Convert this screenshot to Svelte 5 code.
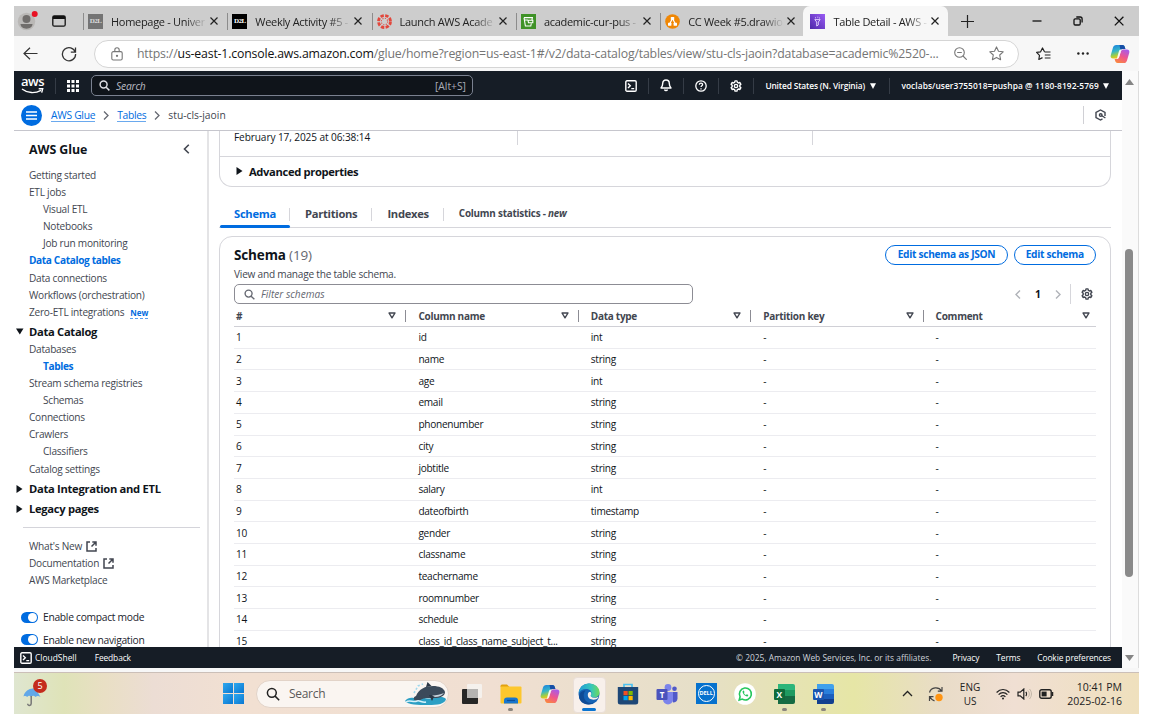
<script>
  const tabs = [
    { title: 'Homepage - Univer', icon: 'd2lgray' },
    { title: 'Weekly Activity #5 -', icon: 'd2l' },
    { title: 'Launch AWS Acade', icon: 'canvas' },
    { title: 'academic-cur-pus -', icon: 's3' },
    { title: 'CC Week #5.drawio', icon: 'drawio' },
    { title: 'Table Detail - AWS -', icon: 'glue', active: true }
  ];
  const navTop = [
    ['Getting started'], ['ETL jobs'], ['Visual ETL', 1], ['Notebooks', 1], ['Job run monitoring', 1],
    ['Data Catalog tables', 0, 1], ['Data connections'], ['Workflows (orchestration)'], ['Zero-ETL integrations', 0, 0, 1]
  ];
  const navCatalog = [
    ['Databases'], ['Tables', 1, 1], ['Stream schema registries'], ['Schemas', 1], ['Connections'],
    ['Crawlers'], ['Classifiers', 1], ['Catalog settings']
  ];
  const columns = ['#', 'Column name', 'Data type', 'Partition key', 'Comment'];
  const rows = [
    ['id', 'int'], ['name', 'string'], ['age', 'int'], ['email', 'string'], ['phonenumber', 'string'],
    ['city', 'string'], ['jobtitle', 'string'], ['salary', 'int'], ['dateofbirth', 'timestamp'], ['gender', 'string'],
    ['classname', 'string'], ['teachername', 'string'], ['roomnumber', 'string'], ['schedule', 'string'],
    ['class_id_class_name_subject_t...', 'string']
  ];
  const gearTeeth = 'M6.7 1.2h2.6l.5 1.9 1.5.9 1.9-.6 1.3 2.3-1.4 1.4v1.8l1.4 1.4-1.3 2.3-1.9-.6-1.5.9-.5 1.9H6.7l-.5-1.9-1.5-.9-1.9.6-1.3-2.3 1.4-1.4V7.1L1.500 5.7l1.3-2.3 1.9.6 1.5-.9z';
</script>

{#snippet copilot(size)}
  <svg width={size} height={size} viewBox="0 0 20 20">
    <defs>
      <linearGradient id="cpa" x1="0" y1="0" x2="0.3" y2="1"><stop offset="0" stop-color="#1b7fe0" /><stop offset=".5" stop-color="#35b6c8" /><stop offset=".8" stop-color="#a6cf3f" /><stop offset="1" stop-color="#f5c518" /></linearGradient>
      <linearGradient id="cpb" x1="0.7" y1="0" x2="0.2" y2="1"><stop offset="0" stop-color="#a95be8" /><stop offset=".5" stop-color="#f0568c" /><stop offset="1" stop-color="#fa8a3c" /></linearGradient>
    </defs>
    <path d="M6.2 1h6.2c1.3 0 2 .8 2.400 2l.6 2h-2.600c-1.200 0-2 .7-2.400 2l-1.700 5.600c-.4 1.300-1 2-2.300 2H3.200C1 14.600.2 13 .8 11L3 3.600C3.500 2 4.500 1 6.200 1z" fill="url(#cpa)" />
    <path d="M9.500 1h3c1.300 0 2 .8 2.300 2l.6 2h-2.600c-1.100 0-1.900.6-2.300 1.700z" fill="#174ea6" />
    <path d="M13.800 19H7.600c-1.300 0-2-.8-2.400-2l-.6-2h2.200c1.300 0 2-.7 2.400-2l1.700-5.600c.4-1.300 1.100-2 2.400-2h3.500c2.200 0 3 1.600 2.400 3.600L17 16.400C16.500 18 15.500 19 13.800 19z" fill="url(#cpb)" />
    <path d="M8.200 9.800l.9-3c.3-.9.9-1.400 1.900-1.400h.9c-.7.500-.9 1.200-1.200 2l-1.700 5.600c-.3.900-.8 1.500-1.500 1.800h-.6z" fill="#fff" opacity=".9" />
  </svg>
{/snippet}

{#snippet shell()}
  <svg width="12" height="12" viewBox="0 0 12 12" fill="none" stroke="currentColor" stroke-width="1.400"><rect x=".8" y=".8" width="10.400" height="10.400" rx="1.200" /><path d="M3 3.500l2.300 2.300L3 8.100M6.300 8.600h2.900" /></svg>
{/snippet}

{#snippet lens(size, w)}
  <svg width={size} height={size} viewBox="0 0 12 12" fill="none" stroke="currentColor" stroke-width={w}><circle cx="5" cy="5" r="3.800" /><path d="M7.800 7.800l3.500 3.500" /></svg>
{/snippet}

{#snippet gear(size)}
  <svg width={size} height={size} viewBox="0 0 16 16" fill="none" stroke="currentColor" stroke-width="1.900" stroke-linejoin="round"><path d={gearTeeth} /><circle cx="8" cy="8" r="2.200" /></svg>
{/snippet}

{#snippet ext()}
  <svg width="11" height="11" viewBox="0 0 11 11" fill="none" stroke="#424650" stroke-width="1.500"><path d="M4 1H1v9h9V7M6.300 1H10v3.700M10 1L5.500 5.500" /></svg>
{/snippet}

{#snippet favicon(kind)}
  {#if kind === 'd2l' || kind === 'd2lgray'}
    <span class="d2l" class:gray={kind === 'd2lgray'}>D2L</span>
  {:else if kind === 'canvas'}
    <svg width="15" height="15" viewBox="0 0 15 15"><circle cx="7.500" cy="7.500" r="6" fill="none" stroke="#e2473c" stroke-width="2.800" stroke-dasharray="3.300 1.410" /><circle cx="7.500" cy="7.500" r="3.200" fill="none" stroke="#e2473c" stroke-width="1.100" stroke-dasharray="1.100 1.410" /></svg>
  {:else if kind === 's3'}
    <svg width="15" height="15" viewBox="0 0 15 15"><rect width="15" height="15" fill="#3f9227" /><path d="M3 3.600h8.400l-.5 2.500M3 3.600l1.400 8.400h5.400l.5-2.500M3.400 6h3.500M7 6.200h4.800v2.600H7.500z" fill="none" stroke="#fff" stroke-width="1.100" /></svg>
  {:else if kind === 'drawio'}
    <svg width="15" height="15" viewBox="0 0 15 15"><circle cx="7.500" cy="7.500" r="7.300" fill="#f08705" /><path d="M7.500 4.500L4.600 10M7.500 4.500l2.900 5.500" stroke="#fff" stroke-width="1.200" /><rect x="5.800" y="3" width="3.400" height="3" rx=".5" fill="#fff" /><rect x="3" y="8.800" width="3.400" height="3" rx=".5" fill="#fff" /><rect x="8.600" y="8.800" width="3.400" height="3" rx=".5" fill="#fff" /></svg>
  {:else}
    <svg width="15" height="15" viewBox="0 0 15 15"><defs><linearGradient id="gl" x1="0" y1="1" x2="1" y2="0"><stop offset="0" stop-color="#4d27a8" /><stop offset="1" stop-color="#9a5cf5" /></linearGradient></defs><rect width="15" height="15" fill="url(#gl)" /><path d="M4.800 5.600h5.400L8.300 8v3l-1.600 1V8zM5 3.800h1M7.300 3.200h1M9 4h1" fill="none" stroke="#e6d8ff" stroke-width=".9" /></svg>
  {/if}
{/snippet}

<div class="screen">
  <div class="tabbar">
    <span class="avatar">
      <svg width="22" height="22" viewBox="0 0 22 22"><circle cx="10.500" cy="12.500" r="8.700" fill="#bab8b6" /><circle cx="10.500" cy="10" r="4" fill="#706d6b" /><path d="M4.500 15h12c0 2.700-2.500 4.700-6 4.700s-6-2-6-4.700z" fill="#706d6b" /><circle cx="18.700" cy="5" r="3" fill="#e81123" /></svg>
    </span>
    <svg class="work" width="14" height="12" viewBox="0 0 14 12"><rect x=".8" y=".8" width="12.400" height="10.400" rx="1.500" fill="none" stroke="#111" stroke-width="1.300" /><path d="M1 1h12v3H1z" fill="#111" /></svg>
    <div class="tabs">
      {#each tabs as t}
        <div class="tab" class:active={t.active}>
          {@render favicon(t.icon)}
          <span class="ttl">{t.title}</span>
          <svg width="8" height="8" viewBox="0 0 8 8" stroke="#222" stroke-width="1.200"><path d="M.5.5l7 7M7.500.5l-7 7" /></svg>
        </div>
      {/each}
    </div>
    <svg class="plus" width="13" height="13" viewBox="0 0 13 13" stroke="#222" stroke-width="1.200"><path d="M6.500 0v13M0 6.500h13" /></svg>
    <div class="winbtns">
      <svg width="10" height="10" viewBox="0 0 10 10" stroke="#111" stroke-width="1.300"><path d="M.5 5h9" /></svg>
      <svg width="10" height="10" viewBox="0 0 10 10" fill="none" stroke="#111" stroke-width="1.300"><rect x="1" y="2.800" width="6.200" height="6.200" rx="1.200" /><path d="M3.300 1h3.900c1.100 0 1.900.8 1.900 1.900v3.600" /></svg>
      <svg width="10" height="10" viewBox="0 0 10 10" stroke="#111" stroke-width="1.300"><path d="M.8.800l8.600 8.600M9.400.8L.8 9.400" /></svg>
    </div>
  </div>

  <div class="addrbar">
    <svg class="back" width="15" height="13" viewBox="0 0 15 13" fill="none" stroke="#333" stroke-width="1.200"><path d="M14.500 6.500H1M7 .7L1 6.500l6 5.800" /></svg>
    <svg class="reload" width="16" height="16" viewBox="0 0 16 16" fill="none" stroke="#333" stroke-width="1.300"><path d="M14.300 6.200A6.600 6.600 0 1 0 14.600 8M14.500 1.500v4.700H9.800" /></svg>
    <div class="url">
      <svg width="12" height="14" viewBox="0 0 12 14" fill="none" stroke="#777" stroke-width="1.100"><rect x=".8" y="4.600" width="10.400" height="8.400" rx="1.500" /><path d="M3.800 4.600V3a2.200 2.200 0 0 1 4.400 0v1.600" /><circle cx="6" cy="8.800" r=".6" fill="#777" /></svg>
      <span class="urltext">https://<b>us-east-1.console.aws.amazon.com</b>/glue/home?region=us-east-1#/v2/data-catalog/tables/view/stu-cls-jaoin?database=academic%2520-...</span>
      <svg class="zoomout" width="13" height="13" viewBox="0 0 13 13" fill="none" stroke="#777" stroke-width="1.100"><circle cx="5.500" cy="5.500" r="4.800" /><path d="M9 9l3.700 3.700M3.200 5.500h4.600" /></svg>
      <svg width="15" height="15" viewBox="0 0 15 15" fill="none" stroke="#777" stroke-width="1.100" stroke-linejoin="round"><path d="M7.500.9l2 4.300 4.700.6-3.500 3.200.9 4.700-4.100-2.300-4.100 2.300.9-4.700L.8 5.800l4.700-.6z" /></svg>
    </div>
    <svg class="fav" width="15" height="14" viewBox="0 0 15 14" fill="none" stroke="#222" stroke-width="1.200" stroke-linejoin="round"><path d="M8.500 4.800L6.500 1l-1.900 3.800-4 .6 2.900 2.900-.7 4.200L6.500 10.600M8.500 5h6M8.800 8h5.700M8.800 11h5.700" /></svg>
    <svg class="more" width="12" height="3" viewBox="0 0 12 3" fill="#222"><circle cx="1.400" cy="1.500" r="1.200" /><circle cx="6" cy="1.500" r="1.200" /><circle cx="10.600" cy="1.500" r="1.200" /></svg>
    {@render copilot(20)}
  </div>

  <div class="viewport">
    <div class="page">
      <div class="awsnav">
        <div class="logo">
          <span>aws</span>
          <svg width="23" height="6" viewBox="0 0 23 6" fill="none" stroke="#fff" stroke-width="1.400"><path d="M1 1c5.500 4.300 13 4.700 19 1.300M17.700.7l4 .1-1 3.900" /></svg>
        </div>
        <i class="vl"></i>
        <svg class="grid9" width="12" height="12" viewBox="0 0 12 12" fill="#fff"><path d="M0 0h3v3H0zM4.500 0h3v3h-3zM9 0h3v3H9zM0 4.500h3v3H0zM4.500 4.500h3v3h-3zM9 4.500h3v3H9zM0 9h3v3H0zM4.500 9h3v3h-3zM9 9h3v3H9z" /></svg>
        <div class="awssearch">{@render lens(11, 1.6)}<em>Search</em><span>[Alt+S]</span></div>
        <div class="tools">
          <div>{@render shell()}</div>
          <div><svg width="12" height="13" viewBox="0 0 12 13" fill="none" stroke="currentColor" stroke-width="1.400" stroke-linejoin="round"><path d="M6 1C3.800 1 2.700 2.500 2.700 4.500c0 2.500-.8 3.300-1.700 4.500h10c-.9-1.200-1.700-2-1.700-4.500C9.300 2.500 8.200 1 6 1zM4.600 10.500c.3 1.500 2.500 1.500 2.800 0" /></svg></div>
          <div><svg width="12" height="12" viewBox="0 0 12 12" fill="none" stroke="currentColor" stroke-width="1.300"><circle cx="6" cy="6" r="5.200" /><path d="M4.300 4.700C4.400 2.500 7.700 2.600 7.600 4.600 7.500 5.800 6 5.700 6 7.100M6 8.200v1.300" /></svg></div>
          <div>{@render gear(12)}</div>
        </div>
        <div class="region">United States (N. Virginia) <svg width="6" height="6" viewBox="0 0 6 6"><path d="M0 .3h6L3 6z" fill="#fff" /></svg></div>
        <div class="user">voclabs/user3755018=pushpa @ 1180-8192-5769 <svg width="6" height="6" viewBox="0 0 6 6"><path d="M0 .3h6L3 6z" fill="#fff" /></svg></div>
      </div>

      <div class="crumbs">
        <span class="burger"><svg width="11" height="9" viewBox="0 0 11 9" stroke="#fff" stroke-width="1.300"><path d="M0 1h11M0 4.500h11M0 8h11" /></svg></span>
        <span class="lnk">AWS Glue</span>
        <svg class="chev" width="6" height="9" viewBox="0 0 6 9" fill="none" stroke="#656871" stroke-width="1.300"><path d="M1 .5l4 4-4 4" /></svg>
        <span class="lnk">Tables</span>
        <svg class="chev" width="6" height="9" viewBox="0 0 6 9" fill="none" stroke="#656871" stroke-width="1.300"><path d="M1 .5l4 4-4 4" /></svg>
        <span class="cur">stu-cls-jaoin</span>
        <span class="hex"><svg width="11" height="12" viewBox="0 0 11 12" fill="none" stroke="#424650" stroke-width="1.400"><path d="M10 7V3.500L5.500 1 1 3.500v5L5.500 11l2-1.100M6.500 6.500L10.400 9" /><circle cx="5.700" cy="6" r="1.300" /></svg></span>
      </div>

      <div class="body">
        <aside>
          <div class="head"><span>AWS Glue</span><svg width="7" height="10" viewBox="0 0 7 10" fill="none" stroke="#424650" stroke-width="1.600"><path d="M5.800.8L1.500 5l4.300 4.200" /></svg></div>
          {#each navTop as [t, sub, on, isNew]}
            <div class="ni" class:sub class:on>{t}{#if isNew}<span class="new">New</span>{/if}</div>
          {/each}
          <div class="grp first"><svg width="8" height="7" viewBox="0 0 8 7"><path d="M0 .5h7.500L3.800 6.500z" fill="#0f141a" /></svg>Data Catalog</div>
          {#each navCatalog as [t, sub, on]}
            <div class="ni" class:sub class:on>{t}</div>
          {/each}
          <div class="grp di"><svg width="8" height="8" viewBox="0 0 8 8"><path d="M.5 0v8l6-4z" fill="#0f141a" /></svg>Data Integration and ETL</div>
          <div class="grp"><svg width="8" height="8" viewBox="0 0 8 8"><path d="M.5 0v8l6-4z" fill="#0f141a" /></svg>Legacy pages</div>
          <div class="hr"></div>
          <div class="ni">What's New {@render ext()}</div>
          <div class="ni">Documentation {@render ext()}</div>
          <div class="ni">AWS Marketplace</div>
          <div class="tg one"><i></i>Enable compact mode</div>
          <div class="tg"><i></i>Enable new navigation</div>
        </aside>

        <main>
          <section class="details">
            <div class="cols"><div>February 17, 2025 at 06:38:14</div><div></div><div></div></div>
            <div class="adv"><svg width="7" height="8" viewBox="0 0 7 8"><path d="M.5 0v8L6.500 4z" fill="#0f141a" /></svg>Advanced properties</div>
          </section>
          <div class="subtabs">
            <div class="st on">Schema</div>
            <div class="st">Partitions</div>
            <div class="st">Indexes</div>
            <div class="st stat">Column statistics - <em>new</em></div>
          </div>
          <section class="schema">
            <div class="top">
              <h2>Schema <span>(19)</span></h2>
              <div class="btns"><button class="wide">Edit schema as JSON</button><button>Edit schema</button></div>
            </div>
            <p>View and manage the table schema.</p>
            <div class="filterrow">
              <div class="filter">{@render lens(11, 1.5)}<em>Filter schemas</em></div>
              <div class="pager">
                <svg width="6" height="9" viewBox="0 0 6 9" fill="none" stroke="#b0b3b9" stroke-width="1.400"><path d="M5 .5l-4 4 4 4" /></svg>
                <b>1</b>
                <svg width="6" height="9" viewBox="0 0 6 9" fill="none" stroke="#b0b3b9" stroke-width="1.400"><path d="M1 .5l4 4-4 4" /></svg>
                <i></i>
                {@render gear(12)}
              </div>
            </div>
            <div class="tr th">
              {#each columns as c}
                <div>{c}<svg width="8" height="7" viewBox="0 0 8 7"><path d="M1 1h6L4 5.800z" fill="none" stroke="#424650" stroke-width="1.400" stroke-linejoin="round" /></svg></div>
              {/each}
            </div>
            {#each rows as [name, type], i}
              <div class="tr"><div>{i + 1}</div><div>{name}</div><div>{type}</div><div>-</div><div>-</div></div>
            {/each}
          </section>
        </main>
      </div>

      <footer>
        <span class="cs">{@render shell()}CloudShell</span><span class="fb">Feedback</span>
        <span class="copy">© 2025, Amazon Web Services, Inc. or its affiliates.</span><span class="f1">Privacy</span><span class="f2">Terms</span><span class="f3">Cookie preferences</span>
      </footer>
    </div>
    <div class="scroll">
      <svg width="9" height="6" viewBox="0 0 9 6"><path d="M4.500 0L9 6H0z" fill="#858585" /></svg>
      <i></i>
      <svg width="9" height="6" viewBox="0 0 9 6"><path d="M4.500 6L9 0H0z" fill="#858585" /></svg>
    </div>
  </div>

  <div class="taskbar">
    <div class="weather">
      <svg width="19" height="20" viewBox="0 0 19 20"><path d="M.5 9.500C2 3 9 0 13 2.500l4.500 7.500c-2-1.500-3.500-1.300-5 0-1.500-1.600-3-1.600-4.300 0-1.500-1.600-2.700-1.600-4 0-1-1.100-2.300-1.300-3.700-.5z" fill="#62a8e8" /><path d="M8.200 9v7.500c0 2.500-3.500 2.500-3.500.3" fill="none" stroke="#777" stroke-width="1.500" /></svg>
      <b>5</b>
    </div>
    <div class="win"><i></i><i></i><i></i><i></i></div>
    <div class="tsearch">
      <span class="gl">{@render lens(14, 1.3)}</span><span>Search</span>
      <svg width="44" height="24" viewBox="0 0 44 24"><path d="M1 19c3-4 8-4 11-2 6-3 12 1 18-1 5-1 9-2 12 1-1 5-8 6-18 6S4 23 1 19z" fill="#2c9fc4" /><path d="M12 19c-3-1-3-4 0-5 3-7 9-10 17-10 6 0 11 2 12 6 0 4-5 6-10 6-6 0-12-1-16 3z" fill="#3b4a5a" /><path d="M22 5l1.500-5 4 4zM25 13l3 6 3-6z" fill="#2b3746" /><path d="M28 13.500c5 0 8-1 12-2.500-2 2.500-5 4-9 4z" fill="#c9d3dc" /><path d="M2 20c4-3 7 1 11-1 3-1 5 2 9 1" stroke="#d8f3fb" stroke-width="1.500" fill="none" /><path d="M10 11l4-7 5-2" stroke="#9fd8ee" stroke-width="1.600" stroke-dasharray="2 2" fill="none" /></svg>
    </div>
    <div class="apps">
      <div><svg width="22" height="22" viewBox="0 0 22 22"><rect x="1" y="6" width="16" height="15" rx="1" fill="#262626" /><rect x="6" y="1" width="15" height="14" rx="1" fill="#f4f1ee" opacity=".95" /><rect x="6" y="6" width="11" height="9" fill="#b5b3b1" /></svg></div>
      <div class="run"><svg width="22" height="22" viewBox="0 0 22 22"><path d="M.5 3a1.500 1.500 0 0 1 1.500-1.500h5L9.500 4H.5z" fill="#e2a10f" /><rect x=".5" y="3.500" width="21" height="17" rx="1" fill="#fdc72d" /><path d="M4 20.500v-3a3 3 0 0 1 3-3h8a3 3 0 0 1 3 3v3z" fill="#1976cf" /><path d="M7 17.500h8" stroke="#0d4f99" stroke-width="1.200" /></svg></div>
      <div>{@render copilot(20)}</div>
      <div class="edge"><svg width="22" height="22" viewBox="0 0 22 22"><defs><linearGradient id="eg" x1="0" y1=".5" x2="1" y2=".5"><stop offset="0" stop-color="#229bd6" /><stop offset=".6" stop-color="#36c6bb" /><stop offset="1" stop-color="#6fd95a" /></linearGradient></defs><circle cx="11" cy="11" r="10.500" fill="#1663b5" /><path d="M.6 10.500C1 4 5.500.5 11 .5c6 0 10.500 4 10.500 8.700 0 3.300-2.600 5.300-5.300 5.300-2.400 0-3.700-1-3.700-1.900 0-.7.900-1 .9-2.600C13.400 7.600 11.200 6 8 6 4.500 6 1.600 7.800.6 10.500z" fill="url(#eg)" /><path d="M7.500 7.500c-2.300 2.500-2.500 7.500.5 10.500 2.500 2.600 6 2.500 9 .4C13 23 4 22.500 1.300 15.500.4 10 4.500 7.400 7.500 7.500z" fill="#0f4b96" /><path d="M9.800 11.800c0-2 1.200-3.100 2.500-3.100 1.100.8 1.200 2.200.5 3.400-.8 1.500 1 2.700 3.700 2.600 1.800-.1 3-.5 4.200-1.300-.5 1-1 1.900-1.800 2.700-4.300 1.500-9.100.3-9.100-4.300z" fill="#f8f0eb" /></svg></div>
      <div><svg width="22" height="22" viewBox="0 0 22 22"><path d="M7 4V1.500h8V4" fill="none" stroke="#4cc2f1" stroke-width="1.700" /><path d="M.8 4h20.400v15a2.500 2.500 0 0 1-2.500 2.500H3.300A2.500 2.500 0 0 1 .8 19z" fill="#1d4777" /><path d="M6.500 8h4.200v4.200H6.500z" fill="#f25022" /><path d="M11.500 8h4.200v4.200h-4.200z" fill="#7fba00" /><path d="M6.500 13h4.200v4.200H6.500z" fill="#00a4ef" /><path d="M11.500 13h4.200v4.200h-4.200z" fill="#ffb900" /></svg></div>
      <div><span class="teams"><svg width="22" height="22" viewBox="0 0 22 22"><circle cx="12" cy="4.500" r="3.400" fill="#7b83eb" /><circle cx="18.500" cy="5.800" r="2.300" fill="#5059c9" /><path d="M15 9h6.500v6.500c0 2.500-2 4-4.500 4z" fill="#5059c9" /><path d="M7 9h10v7.500a5 5 0 0 1-10 0z" fill="#7b83eb" /><rect x=".5" y="6" width="11" height="11" rx="1" fill="#4b53bc" /></svg><b>T</b></span></div>
      <div><span class="dell"><b>DELL</b></span></div>
      <div><svg width="22" height="22" viewBox="0 0 22 22"><circle cx="11" cy="11" r="10.800" fill="#fff" /><path d="M5.200 17l.9-3.200a6 6 0 1 1 2.200 2.300z" fill="none" stroke="#25c75c" stroke-width="1.600" /><path d="M8.700 8c-.7 2 2.300 5.700 4.900 5.400l.8-1.300-1.600-.9-.8.700c-1-.3-1.800-1.200-2.100-2l.6-.7-.6-1.600z" fill="#25c75c" /></svg></div>
      <div class="run"><span class="off xl"><b>X</b></span></div>
      <div class="run"><span class="off wd"><b>W</b></span></div>
    </div>
    <div class="tray">
      <svg class="up" width="11" height="7" viewBox="0 0 11 7" fill="none" stroke="#222" stroke-width="1.300"><path d="M1 6l4.500-4.500L10 6" /></svg>
      <svg class="sync" width="16" height="16" viewBox="0 0 16 16" fill="none" stroke="#444" stroke-width="1.200"><path d="M1.500 6.500C3 .8 11 .5 13.500 5M14 1v4.200H9.800M1.500 15v-4.300h4M2 11c1 2 2.500 3.300 4.500 3.800" /><circle cx="11" cy="11.500" r="3.700" fill="#ff9412" stroke="none" /></svg>
      <div class="lang">ENG<br />US</div>
      <svg class="wifi" width="14" height="12" viewBox="0 0 14 12" fill="none" stroke="#222" stroke-width="1.200"><path d="M.6 4.500c3.700-4 9.100-4 12.800 0M2.600 6.700c2.600-2.800 6.200-2.800 8.800 0M4.600 8.800c1.500-1.500 3.300-1.500 4.800 0" /><circle cx="7" cy="10.500" r="1" fill="#222" stroke="none" /></svg>
      <svg class="vol" width="15" height="12" viewBox="0 0 15 12" fill="none" stroke="#222" stroke-width="1.200"><path d="M1 4.200h2.200L6.800 1v10L3.200 7.800H1z" /><path d="M8.800 4c1 1 1 3 0 4" /><path d="M10.800 2.500c2 2 2 5 0 7M12.500 1c2.600 3 2.600 7 0 10" stroke="#bbb0a0" stroke-width=".9" /></svg>
      <svg class="bat" width="15" height="10" viewBox="0 0 15 10"><rect x=".8" y=".8" width="11.400" height="8.400" rx="1.800" fill="none" stroke="#222" stroke-width="1.400" /><rect x="2.600" y="2.600" width="5" height="4.800" fill="#222" /><path d="M13.500 3v4" stroke="#222" stroke-width="1.500" /></svg>
      <div class="clock">10:41 PM<br />2025-02-16</div>
    </div>
  </div>
</div>

<style>
  :global(body) { background: #fff; }
  .screen { box-sizing: border-box; width: 1125px; height: 708px; margin: 6px 0 0 14px; display: flex; flex-direction: column; overflow: hidden; font-family: "Open Sans", "Noto Sans", sans-serif; font-size: 10.300px; color: #0f141a; background: #f7f7f7; white-space: nowrap; }
  .screen * { box-sizing: border-box; }
  svg { display: block; flex: none; }
  em { font-style: italic; }

  .tabbar { height: 30px; flex: none; background: #cdcdcd; display: flex; align-items: center; }
  .avatar { margin: -3px 0 0 2px; width: 22px; }
  .work { margin-left: 14px; }
  .tabs { display: flex; margin-left: 17px; height: 30px; }
  .tab { width: 144.300px; display: flex; align-items: center; padding-left: 5px; position: relative; }
  .tab::before { content: ""; position: absolute; left: 0; top: 7px; width: 1px; height: 17px; background: #8c8c8c; }
  .tab.active { background: #f7f7f7; border-radius: 7px 7px 0 0; padding-left: 7px; margin-left: -1px; width: 145px; }
  .tab.active::before { display: none; }
  .ttl { width: 96px; margin: 0 3px 0 8px; font-size: 11px; letter-spacing: -.3px; color: #222; -webkit-mask-image: linear-gradient(90deg, #000 77%, transparent 100%); mask-image: linear-gradient(90deg, #000 77%, transparent 100%); }
  .active .ttl { margin: 0 2px 0 8px; }
  .d2l { width: 15px; height: 15px; flex: none; background: #000; color: #fff; font: bold 7px/15px "Liberation Serif", serif; text-align: center; letter-spacing: -.5px; }
  .d2l.gray { background: #747474; color: #ddd; }
  .plus { margin-left: 13px; }
  .winbtns { margin-left: auto; display: flex; gap: 31px; padding-right: 15px; }

  .addrbar { height: 35px; flex: none; background: #f7f7f7; display: flex; align-items: center; padding-left: 9px; }
  .reload { margin-left: 23px; }
  .url { margin-left: 17px; width: 925px; height: 28px; border: 1px solid #d5d5d5; border-radius: 14px; background: #fff; display: flex; align-items: center; padding: 0 14px 0 16px; }
  .urltext { margin-left: 14px; width: 818px; font-size: 12.300px; color: #757575; letter-spacing: -.18px; }
  .urltext b { font-weight: 400; color: #111; }
  .zoomout { margin-right: 22px; }
  .fav { margin-left: 17px; }
  .more { margin: 0 21px 0 26px; }

  .viewport { flex: none; height: 597px; display: flex; background: #fff; }
  .page { width: 1108px; display: flex; flex-direction: column; }
  .scroll { flex: 1; background: #fafafa; border-right: 1px solid #ddd; display: flex; flex-direction: column; align-items: center; padding: 8px 2px 7px 0; }
  .scroll i { width: 8px; height: 328px; border-radius: 4px; background: #8a8a8a; margin: 164px 0 78px; }

  .awsnav { height: 29px; flex: none; background: #161d26; color: #fff; display: flex; align-items: center; }
  .logo { margin: -3px 0 0 7px; width: 23px; font: 600 13px/12px "Open Sans", sans-serif; text-align: center; letter-spacing: -.5px; }
  .logo svg { margin-top: 1px; }
  .vl { width: 1px; height: 16px; background: #353c46; margin-left: 11px; }
  .grid9 { margin-left: 11px; }
  .awssearch { margin-left: 12px; width: 382px; height: 21px; border: 1px solid #7a8190; border-radius: 5px; background: #0f141a; display: flex; align-items: center; padding: 0 6px 0 7px; color: #dedee3; }
  .awssearch em { margin-left: 6px; color: #b8bac2; letter-spacing: -.2px; }
  .awssearch span { margin-left: auto; color: #a9adb8; }
  .tools { display: flex; margin-left: 141px; }
  .tools div { width: 35.100px; display: flex; justify-content: center; border-right: 1px solid #353c46; color: #fff; height: 16px; align-items: center; }
  .region, .user { font-size: 8.400px; font-weight: 600; display: flex; align-items: center; }
  .region { margin-left: 11px; height: 16px; border-right: 1px solid #353c46; width: 125px; letter-spacing: -.15px; }
  .region svg { margin-left: 5px; }
  .user { margin-left: 11px; letter-spacing: .07px; }
  .user svg { margin-left: 4px; }

  .crumbs { height: 31px; flex: none; display: flex; align-items: center; border-bottom: 1px solid #c6c6cd; padding: 0 16px 0 7px; background: #fff; }
  .burger { width: 21px; height: 21px; border-radius: 50%; background: #006ce0; display: flex; align-items: center; justify-content: center; margin-right: 9px; }
  .lnk { color: #006ce0; border-bottom: 1px solid #6aa9ee; line-height: 12px; letter-spacing: -.3px; }
  .chev { margin: 0 8px 0 8px; }
  .cur { color: #424650; font-weight: 500; }
  .hex { margin-left: auto; border-left: 1px solid #d0d0d5; padding-left: 11px; height: 18px; display: flex; align-items: center; }

  .body { flex: 1; min-height: 0; display: flex; overflow: hidden; }
  aside { width: 195px; flex: none; border-right: 2px solid #e4e4e6; padding-left: 15px; overflow: hidden; }
  .head { display: flex; justify-content: space-between; align-items: center; padding-right: 17px; font-size: 12.400px; font-weight: 700; height: 36px; letter-spacing: -.05px; }
  .ni { height: 17.100px; line-height: 17.100px; color: #424650; font-size: 10.100px; display: flex; align-items: center; letter-spacing: -.24px; }
  .ni.sub { padding-left: 14px; }
  .ni.on { color: #006ce0; font-weight: 700; letter-spacing: -.36px; }
  .ni svg { margin-left: 4px; }
  .new { color: #006ce0; font-size: 8px; font-weight: 700; margin: 3px 0 0 6px; line-height: 10px; border-bottom: 1px dashed #5aa0ee; letter-spacing: 0; }
  .grp { height: 20px; display: flex; align-items: center; font-size: 11.200px; font-weight: 700; margin-left: -13px; letter-spacing: -.3px; }
  .grp svg { margin-right: 5px; }
  .grp.first { margin-top: 2px; height: 18px; }
  .grp.di { margin-top: 1px; }
  .hr { height: 1px; background: #d4d4da; margin: 8px 7px 10px -6px; }
  .tg { height: 22.500px; display: flex; align-items: center; margin-left: -8px; color: #1b232d; letter-spacing: -.3px; }
  .tg.one { margin-top: 17px; }
  .tg i { width: 17px; height: 11px; border-radius: 6px; background: #006ce0; margin-right: 5px; display: flex; justify-content: flex-end; padding: 1px; }
  .tg i::after { content: ""; width: 9px; height: 9px; border-radius: 50%; background: #fff; }

  main { flex: 1; padding: 0 11px 0 10px; }
  .details { height: 56px; border: 1px solid #d6d6db; border-top: 0; border-radius: 0 0 13px 13px; }
  .cols { height: 26px; border-bottom: 1px solid #d6d6db; display: grid; grid-template-columns: 298px 295px 1fr; font-size: 10.100px; letter-spacing: -.1px; line-height: 13px; }
  .cols div { height: 14px; border-right: 1px solid #d6d6db; padding-left: 14px; }
  .cols div:last-child { border: 0; }
  .adv { height: 28px; display: flex; align-items: center; padding-left: 16px; font-size: 11.200px; font-weight: 700; letter-spacing: -.35px; }
  .adv svg { margin-right: 6px; }
  .subtabs { margin-top: 13px; height: 28px; display: flex; border-bottom: 1px solid #d6d6db; font-size: 11.200px; font-weight: 700; color: #424650; }
  .st { display: flex; align-items: center; padding: 0 15px; position: relative; height: 27px; letter-spacing: -.28px; }
  .st:not(:last-child)::after { content: ""; position: absolute; right: 0; top: 8px; width: 1px; height: 13px; background: #d6d6db; }
  .st.on { color: #006ce0; margin-left: 1px; padding: 0 14px; }
  .st.on::before { content: ""; position: absolute; left: 0; right: 0; bottom: -1px; height: 3px; border-radius: 2px; background: #006ce0; }
  .st.stat { font-size: 9.900px; padding-bottom: 2px; white-space: pre; letter-spacing: -.22px; }
  .schema { margin-top: 8px; height: 500px; border: 1px solid #d6d6db; border-radius: 13px 13px 0 0; padding: 8px 14px 0; }
  .top { display: flex; justify-content: space-between; height: 20px; align-items: center; }
  h2 { margin: 0; font-size: 13.500px; font-weight: 700; letter-spacing: -.15px; }
  h2 span { font-weight: 400; color: #656871; }
  .btns { display: flex; gap: 5.500px; }
  button { width: 82.500px; height: 20px; border: 1.500px solid #006ce0; border-radius: 10px; background: #fff; color: #006ce0; font: 700 10.200px/15px "Open Sans", sans-serif; letter-spacing: -.3px; padding: 0 0 2px; text-align: center; }
  .wide { width: 123px; }
  p { margin: 1px 0 0; height: 17px; line-height: 16px; font-size: 10.100px; letter-spacing: -.22px; color: #424650; }
  .filterrow { display: flex; justify-content: space-between; height: 20px; margin-top: 1px; }
  .filter { width: 459px; height: 20px; border: 1px solid #8c8c94; border-radius: 5px; display: flex; align-items: center; padding-left: 9px; color: #656871; }
  .filter em { margin-left: 6px; font-size: 10.100px; }
  .pager { display: flex; align-items: center; padding-right: 3px; color: #424650; }
  .pager b { margin: 0 14px; color: #0f141a; }
  .pager i { width: 1px; height: 20px; background: #d6d6db; margin: 0 10px 0 9px; }
  .tr { display: grid; grid-template-columns: repeat(5, 1fr); height: 21.710px; border-bottom: 1px solid #ececf0; font-size: 10.100px; letter-spacing: -.28px; align-items: center; color: #0f141a; }
  .tr div { padding-left: 12px; }
  .tr div:first-child { padding-left: 2px; }
  .th { height: 22px; margin-top: 1px; font-weight: 700; font-size: 10px; color: #424650; border-color: #d0d0d6; }
  .th div { display: flex; justify-content: space-between; align-items: center; padding-right: 9px; border-right: 1px solid #8c8c94; height: 12px; }
  .th div:last-child { border: 0; padding-right: 6px; }

  footer { height: 21px; flex: none; background: #161d26; color: #fff; display: flex; align-items: center; font-size: 8.400px; font-weight: 500; padding: 0 11px 0 6px; letter-spacing: -.1px; }
  .cs { display: flex; align-items: center; gap: 3px; letter-spacing: .03px; }
  .fb { margin-left: 18px; letter-spacing: -.1px; }
  .copy { margin-left: auto; color: #d0d3da; letter-spacing: 0; }
  .f1 { margin-left: 21px; }
  .f2, .f3 { margin-left: 17px; }

  .taskbar { margin-top: 4px; flex: 1; border-top: 1px solid #cbbfb8; background: linear-gradient(90deg, #dfe6d0 0, #dfe3b8 50px, #e9dfc4 90px, #ecddd4 140px, #f2e0d2 230px, #f0dfd2 480px, #e6dfc8 680px, #e6e6a6 840px, #e9dcc8 930px, #f0dfd3 1000px, #efe0bd 1125px); display: flex; align-items: center; }
  .weather { margin: 0 0 0 9px; width: 28px; height: 32px; padding-top: 9px; position: relative; }
  .weather b { position: absolute; left: 10px; top: 1px; width: 14px; height: 14px; border-radius: 50%; background: #c42b1c; color: #fff; font: 9px/14px "Open Sans", sans-serif; text-align: center; }
  .win { margin-left: 172px; width: 21px; height: 21px; display: grid; grid-template-columns: 1fr 1fr; gap: 1px; }
  .win i { background: linear-gradient(135deg, #2ea8ee, #0a77d2); }
  .tsearch { margin-left: 12px; width: 193px; height: 28px; border-radius: 14px; background: #faf5f1; border: 1px solid #e2d3c8; display: flex; align-items: center; padding-left: 9px; font-size: 12px; letter-spacing: -.3px; color: #5a5a5a; }
  .gl { color: #222; margin-right: 9px; }
  .tsearch > svg { margin-left: auto; }
  .apps { display: flex; margin-left: 3px; }
  .apps > div { width: 39.100px; height: 40px; display: flex; align-items: center; justify-content: center; position: relative; }
  .run::after { content: ""; position: absolute; bottom: 3px; left: 17px; width: 5px; height: 3px; border-radius: 2px; background: #8b857e; }
  .edge::before { content: ""; position: absolute; left: 4px; top: 3px; width: 31px; height: 34px; border-radius: 4px; background: #f8f0eb; border: 1px solid #eadfd8; }
  .edge svg { position: relative; }
  .edge::after { content: ""; position: absolute; bottom: 3px; left: 13px; width: 14px; height: 3px; border-radius: 2px; background: #0a74d0; }
  .teams { position: relative; }
  .teams b { position: absolute; left: 0; top: 6px; width: 12px; font-size: 8px; line-height: 11px; color: #fff; text-align: center; }
  .dell { width: 21px; height: 21px; background: #0672ce; display: flex; align-items: center; justify-content: center; }
  .dell b { width: 17px; height: 17px; border: 1px solid #fff; border-radius: 50%; color: #fff; font-size: 5.500px; line-height: 15px; text-align: center; }
  .off { width: 21px; height: 20px; padding: 5px 0 0; border-radius: 2px; background-size: 17px 20px; background-position: right; background-repeat: no-repeat; }
  .off b { display: block; width: 11px; height: 11px; border-radius: 1px; color: #fff; font-size: 8.500px; line-height: 11px; text-align: center; }
  .off.wd { background-image: linear-gradient(180deg, #3fa0ec 0 25%, #2a7fdb 25% 50%, #1b5fbe 50% 75%, #123f8f 75%); }
  .off.wd b { background: #1a56b0; }
  .off.xl { background-image: linear-gradient(180deg, #2cb57a 0 30%, #1f9a60 30% 60%, #166b43 60%); }
  .off.xl b { background: #0f6b3b; }
  .tray { margin-left: auto; display: flex; align-items: center; padding-right: 17px; color: #222; font-size: 10.500px; line-height: 14px; }
  .up { margin-right: 15px; }
  .lang { margin: 0 16px 0 16px; text-align: center; font-size: 10px; }
  .vol { margin: 0 7px; }
  .clock { margin-left: 13px; text-align: right; }
</style>
